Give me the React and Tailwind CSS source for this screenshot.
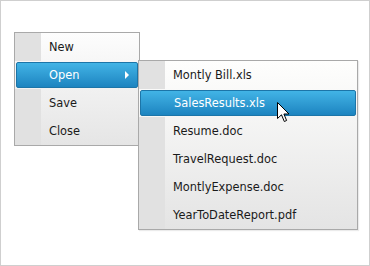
import React from 'react';

const mainItems = ['New', 'Open', 'Save', 'Close'];
const subItems = [
  'Montly Bill.xls',
  'SalesResults.xls',
  'Resume.doc',
  'TravelRequest.doc',
  'MontlyExpense.doc',
  'YearToDateReport.pdf',
];

const font = { fontFamily: '"DejaVu Sans", Verdana, sans-serif' };

const Row = ({ label, active, arrow, textPad }) => {
  if (active) {
    return (
      <div className="h-[28px] flex items-center py-[1px] px-[1px]">
        <div
          className={`relative h-full w-full flex items-center pt-[1px] rounded-[2px] border border-[#1c75a8] bg-gradient-to-b from-[#42b4e6] to-[#1c84c0] text-white ${textPad}`}
        >
          {label}
          {arrow && (
            <span className="absolute right-[8px] top-1/2 -translate-y-1/2 w-0 h-0 border-y-[4px] border-y-transparent border-l-[4px] border-l-white" />
          )}
        </div>
      </div>
    );
  }
  return (
    <div className="h-[28px] flex">
      <div className="w-[26px] bg-[#e1e1e1]" />
      <div className="flex-1 flex items-center pt-[2px] pl-[8px] text-[#1a1a1a]">{label}</div>
    </div>
  );
};

const Cursor = () => (
  <svg className="absolute left-[276px] top-[101px]" width="13" height="21" viewBox="0 0 13 21">
    <path
      d="M0.5 0.5 L0.5 16.5 L4.5 12.8 L7.3 19.5 L9.6 18.5 L6.9 12 L12 12 Z"
      fill="#ffffff"
      stroke="#000000"
      strokeWidth="1"
      strokeLinejoin="round"
    />
  </svg>
);

export default function App() {
  return (
    <div
      className="relative w-[370px] h-[266px] border border-[#cfcfcf] bg-white text-[11.4px] overflow-hidden"
      style={font}
    >
      {/* main menu */}
      <div className="ml-[13px] mt-[31px] w-[126px] border border-[#a9a9a9] bg-gradient-to-b from-[#fdfdfd] to-[#e5e5e5]">
        {mainItems.map((item) => (
          <Row key={item} label={item} active={item === 'Open'} arrow textPad="pl-[32px]" />
        ))}
      </div>

      {/* submenu */}
      <div className="absolute left-[137px] top-[59px] w-[220px] border border-[#a9a9a9] bg-gradient-to-b from-[#fefefd] to-[#e4e4e4] shadow-[1px_1px_1px_rgba(0,0,0,0.08)]">
        {subItems.map((item) => (
          <Row key={item} label={item} active={item === 'SalesResults.xls'} textPad="pl-[33px]" />
        ))}
      </div>

      <Cursor />
    </div>
  );
}
